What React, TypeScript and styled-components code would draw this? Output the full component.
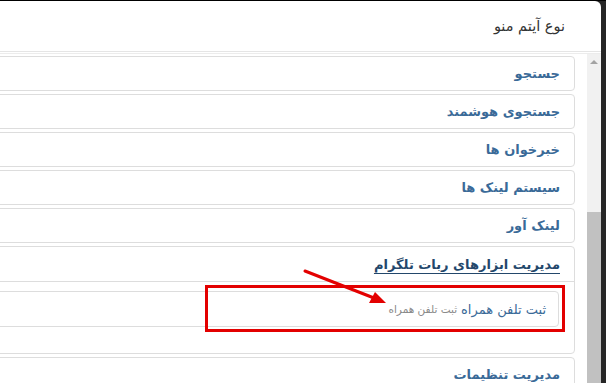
import styled, { createGlobalStyle } from "styled-components";

const GlobalStyle = createGlobalStyle`
  html, body {
    margin: 0;
    padding: 0;
    background: #000;
    overflow: hidden;
  }
`;

const Backdrop = styled.div`
  width: 606px;
  height: 383px;
  padding-top: 1px;
  box-sizing: border-box;
  background: #262626;
  border-top: 1px solid #000;
  overflow: hidden;
  font-family: "DejaVu Sans", Tahoma, sans-serif;
`;

const Modal = styled.div`
  position: relative;
  width: 601px;
  height: 382px;
  margin-top: -1px;
  background: #fff;
  border-top-right-radius: 6px;
  display: flex;
  flex-direction: column;
`;

const Header = styled.div`
  height: 50px;
  flex-shrink: 0;
  display: flex;
  align-items: center;
  padding-right: 36px;
  border-bottom: 1px solid #e5e5e5;
  direction: rtl;
`;

const Title = styled.h4`
  margin: 0;
  font-size: 14.5px;
  font-weight: normal;
  color: #333;
`;

const Body = styled.div`
  flex: 1;
  min-height: 0;
  margin-top: 1px;
  border-top: 1px solid #ececec;
  display: flex;
`;

const Content = styled.div`
  flex: 1;
  overflow: hidden;
  padding: 2px 12px 0 0;
  direction: rtl;
`;

const PanelList = styled.div`
  margin-left: -20px;
`;

const Panel = styled.div`
  border: 1px solid #ddd;
  border-radius: 4px;
  background: #fff;
  & + & {
    margin-top: 3px;
  }
`;

const PanelHeading = styled.div<{ $open?: boolean }>`
  height: ${(p) => (p.$open ? "34px" : "33px")};
  padding: 0 14px;
  display: flex;
  align-items: center;
  border-bottom: ${(p) => (p.$open ? "1px solid #ddd" : "none")};
`;

const PanelLink = styled.a<{ $active?: boolean }>`
  font-size: 13px;
  font-weight: bold;
  color: ${(p) => (p.$active ? "#23476b" : "#3a6a98")};
  text-decoration: ${(p) => (p.$active ? "underline" : "none")};
  text-underline-offset: 4px;
`;

const PanelBody = styled.div`
  padding: 9px 15px 26px;
`;

const Item = styled.div`
  height: 34px;
  border: 1px solid #ddd;
  border-radius: 4px;
  padding: 0 12px;
  display: flex;
  align-items: center;
  gap: 4px;
`;

const ItemName = styled.span`
  font-size: 13px;
  color: #3a6a98;
`;

const ItemHint = styled.span`
  font-size: 10.5px;
  color: #8a8a8a;
`;

const Track = styled.div`
  width: 14px;
  flex-shrink: 0;
  background: #f1f1f1;
  display: flex;
  flex-direction: column;
  align-items: center;
`;

const ArrowButton = styled.div`
  height: 16px;
  width: 100%;
  display: flex;
  align-items: center;
  justify-content: center;
  &::before {
    content: "";
    border-left: 4px solid transparent;
    border-right: 4px solid transparent;
    border-bottom: 4px solid #a3a3a3;
  }
`;

const Thumb = styled.div`
  margin-top: auto;
  width: 100%;
  height: 171px;
  background: #c1c1c1;
`;

const Highlight = styled.div`
  position: absolute;
  left: 205px;
  top: 284px;
  width: 360px;
  height: 47px;
  box-sizing: border-box;
  border: 3px solid #e30000;
  pointer-events: none;
`;

const Arrow = styled.svg`
  position: absolute;
  left: 300px;
  top: 262px;
  pointer-events: none;
`;

const panels = ["جستجو", "جستجوی هوشمند", "خبرخوان ها", "سیستم لینک ها", "لینک آور"];

export default function App() {
  return (
    <>
      <GlobalStyle />
      <Backdrop>
        <Modal>
          <Header>
            <Title>نوع آیتم منو</Title>
          </Header>
          <Body>
            <Content>
              <PanelList>
                {panels.map((name) => (
                  <Panel key={name}>
                    <PanelHeading>
                      <PanelLink>{name}</PanelLink>
                    </PanelHeading>
                  </Panel>
                ))}
                <Panel>
                  <PanelHeading $open>
                    <PanelLink $active>مدیریت ابزارهای ربات تلگرام</PanelLink>
                  </PanelHeading>
                  <PanelBody>
                    <Item>
                      <ItemName>ثبت تلفن همراه</ItemName>
                      <ItemHint>ثبت تلفن همراه</ItemHint>
                    </Item>
                  </PanelBody>
                </Panel>
                <Panel>
                  <PanelHeading>
                    <PanelLink>مدیریت تنظیمات</PanelLink>
                  </PanelHeading>
                </Panel>
              </PanelList>
            </Content>
            <Track>
              <ArrowButton />
              <Thumb />
            </Track>
          </Body>
          <Highlight />
          <Arrow width="90" height="44" viewBox="0 0 90 44">
            <line x1="5" y1="8" x2="74" y2="35" stroke="#e30000" strokeWidth="3" strokeLinecap="round" />
            <polygon points="86,40 69,40 75,29" fill="#e30000" />
          </Arrow>
        </Modal>
      </Backdrop>
    </>
  );
}
